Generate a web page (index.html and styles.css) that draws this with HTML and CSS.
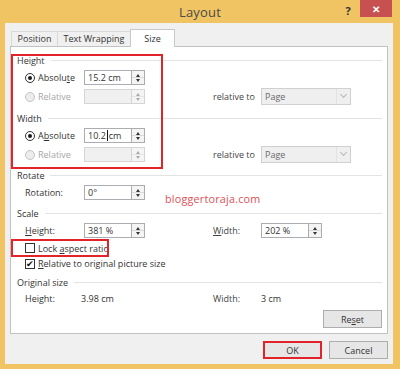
FILE: index.html
```html
<!doctype html>
<html lang="en">
<head>
  <meta charset="UTF-8" />
  <title>Layout</title>
  <link rel="stylesheet" href="styles.css">
</head>
<body>
  <div class="window">
    <div class="titlebar">
      <span></span>
      <span class="title">Layout</span>
      <div class="caption-btns">
        <span class="help">?</span>
        <span class="close">&#x2715;</span>
      </div>
    </div>

    <div class="client">
      <div class="tabs">
        <div class="tab">Position</div>
        <div class="tab">Text Wrapping</div>
        <div class="tab active">Size</div>
      </div>

      <div class="panel">
        <div class="group">Height</div>
        <div class="row">
          <div class="lbl"><span class="radio on"></span><span>Absolu<u>t</u>e</span></div>
          <div class="field"><div class="input">15.2 cm</div><div class="spin"></div></div>
        </div>
        <div class="row">
          <div class="lbl off"><span class="radio"></span><span>Relative</span></div>
          <div class="field"><div class="input dis"></div><div class="spin dis"></div></div>
          <div class="gap"></div>
          <div class="lbl2">relative to</div>
          <div class="select"><span>Page</span><i class="chev"></i></div>
        </div>

        <div class="group">Width</div>
        <div class="row">
          <div class="lbl"><span class="radio on"></span><span>A<u>b</u>solute</span></div>
          <div class="field"><div class="input">10.2<span class="caret"></span>cm</div><div class="spin"></div></div>
        </div>
        <div class="row">
          <div class="lbl off"><span class="radio"></span><span>Relative</span></div>
          <div class="field"><div class="input dis"></div><div class="spin dis"></div></div>
          <div class="gap"></div>
          <div class="lbl2">relative to</div>
          <div class="select"><span>Page</span><i class="chev"></i></div>
        </div>

        <div class="group">Rotate</div>
        <div class="row">
          <div class="lbl">Rotation:</div>
          <div class="field"><div class="input">0°</div><div class="spin"></div></div>
        </div>

        <div class="group">Scale</div>
        <div class="row">
          <div class="lbl"><span><u>H</u>eight:</span></div>
          <div class="field"><div class="input">381 %</div><div class="spin"></div></div>
          <div class="gap"></div>
          <div class="lbl2"><u>W</u>idth:</div>
          <div class="field"><div class="input">202 %</div><div class="spin"></div></div>
        </div>
        <div class="row check-row lock">
          <span class="check"></span><span>Lock <u>a</u>spect ratio</span>
        </div>
        <div class="row check-row rel">
          <span class="check on">&#x2714;</span><span><u>R</u>elative to original picture size</span>
        </div>

        <div class="group">Original size</div>
        <div class="row orig">
          <div class="lbl">Height:</div>
          <div class="val">3.98 cm</div>
          <div class="lbl2">Width:</div>
          <div>3 cm</div>
        </div>

        <div class="reset-row">
          <button class="btn reset">Re<u>s</u>et</button>
        </div>
      </div>

      <div class="buttons">
        <button class="btn ok">OK</button>
        <button class="btn">Cancel</button>
      </div>
    </div>

    <div class="watermark">bloggertoraja.com</div>
    <div class="mark mark-size"></div>
    <div class="mark mark-lock"></div>
  </div>
</body>
</html>
```

FILE: styles.css
```css
:root { --frame:#f0c462; --text:#333; --dis:#a6a6a6; --red:#e2232a; }
*{ box-sizing:border-box; }
body{
  margin:0; width:400px; height:369px; overflow:hidden;
  background: var(--frame);
  font-family: "Open Sans", "Noto Sans", sans-serif;
  font-size: 9px;
  color: var(--text);
}
u{ text-decoration-thickness:1px; text-underline-offset:1px; }
.window{ position:relative; width:400px; height:369px; }

.titlebar{
  height:23px;
  display:grid;
  grid-template-columns: 1fr auto 1fr;
  align-items:center;
}
.title{ font-size:13px; color:#4a4a4a; letter-spacing:.2px; }
.caption-btns{ display:flex; justify-content:flex-end; align-self:start; padding-right:8px; }
.help{ font-size:11px; font-weight:700; color:#333; width:14px; margin-top:3px; margin-right:5px; text-align:center; }
.close{
  width:32px; height:17px;
  background:#c75050; color:#fff;
  font-size:10px; font-weight:700;
  display:grid; place-items:center;
}

.client{
  margin-left:5px; width:388px; height:341px;
  background:#f0f0f0;
  padding:6px 5px 0 5px;
}
.tabs{ display:flex; align-items:flex-end; height:17px; padding-left:1px; }
.tab{
  height:15px;
  border:1px solid #d9d9d9; border-bottom:0;
  background:#f0f0f0;
  line-height:13px;
  text-align:center;
  white-space:nowrap;
  color:#333;
}
.tab + .tab{ margin-left:-1px; }
.tab:nth-child(1){ width:47px; }
.tab:nth-child(2){ width:74px; }
.tab.active{
  width:45px; height:18px; margin-bottom:-1px;
  background:#fff; border-color:#c8c8c8;
  line-height:17px;
  position:relative; z-index:1;
}

.panel{
  border:1px solid #c2c2c2;
  background:#fff;
  padding:5px 5px 5px 6px;
}
.group{
  height:16px;
  display:flex; align-items:center;
}
.group::after{
  content:""; flex:1;
  border-top:1px solid #e3e3e3;
  margin-left:6px;
}
.row + .group{ margin-top:3px; }
.row:nth-child(3) + .group{ margin-top:4px; }
.row{
  height:19px;
  display:flex; align-items:center;
  padding-left:8px;
}
.lbl{ width:59px; display:flex; align-items:center; }
.lbl.off{ color:var(--dis); }
.gap{ width:68px; }
.lbl2{ width:48px; color:#444; }

.radio{
  width:10px; height:10px; border-radius:50%;
  border:1px solid #333; background:#fff;
  margin-right:3px; position:relative;
}
.radio.on::after{
  content:""; position:absolute; inset:2px;
  border-radius:50%; background:#1a1a1a;
}
.off .radio{ border-color:#c4c4c4; background:#ececec; }

.field{ display:flex; width:61px; }
.input{
  width:48px; height:15px;
  border:1px solid #abadb3; background:#fff;
  padding-left:3px; line-height:13px;
  white-space:nowrap;
}
.input.dis{ border-color:#d5d5d5; background:#f0f0f0; }
.caret{ display:inline-block; width:1px; height:11px; background:#111; vertical-align:-2px; margin:0 1px; }
.spin{
  width:14px; height:15px; margin-left:-1px;
  border:1px solid #acacac;
  background:#f4f4f4;
  position:relative;
  box-shadow: inset 0 6px 0 0 #f4f4f4, inset 0 7px 0 0 #dadada;
}
.spin::before, .spin::after{
  content:""; position:absolute; left:50%; margin-left:-2.5px;
  border-left:2.5px solid transparent; border-right:2.5px solid transparent;
}
.spin::before{ top:3px; border-bottom:3px solid #333; }
.spin::after{ bottom:2px; border-top:3px solid #333; }
.spin.dis{ border-color:#d5d5d5; box-shadow:inset 0 6px 0 0 #f4f4f4, inset 0 7px 0 0 #e4e4e4; }
.spin.dis::before{ border-bottom-color:#aaa; }
.spin.dis::after{ border-top-color:#aaa; }

.select{
  width:90px; height:17px;
  border:1px solid #d0d0d0; background:#efefef;
  display:flex; align-items:center; justify-content:space-between;
  padding-left:3px;
  color:#6a6a6a;
}
.chev{
  width:14px; height:15px;
  border-left:1px solid #e2e2e2;
  position:relative;
}
.chev::after{
  content:""; position:absolute; left:4px; top:3px;
  width:4px; height:4px;
  border-right:1px solid #b8b8b8; border-bottom:1px solid #b8b8b8;
  transform:rotate(45deg);
}

.check-row.lock{ height:16px; }
.check-row.rel{ height:15px; }
.check{
  width:10px; height:10px;
  border:1px solid #333; background:#fff;
  margin-right:3px;
  font-size:9px; line-height:8px; text-align:center; color:#111;
}

.row.orig{ height:16px; }
.orig .lbl{ width:56px; }
.val{ width:132px; }

.reset-row{ display:flex; justify-content:flex-end; margin-top:4px; }
.btn{
  font:inherit; color:#333;
  height:18px; width:59px;
  border:1px solid #adadad;
  background:#e6e6e6;
  padding:0; margin:0;
}
.buttons{ display:flex; justify-content:flex-end; gap:7px; margin-top:7px; }
.btn.ok{ border:2px solid var(--red); }

.watermark{
  position:absolute; left:165px; top:191px;
  font-size:10.8px; color:#e05058; letter-spacing:.2px;
}
.mark{ position:absolute; border:2px solid var(--red); }
.mark-size{ left:11px; top:54px; width:152px; height:115px; }
.mark-lock{ left:11px; top:239px; width:98px; height:18px; }
```
